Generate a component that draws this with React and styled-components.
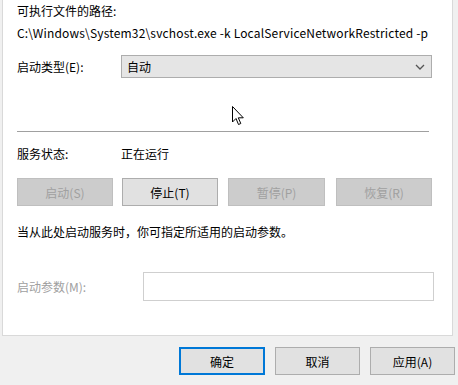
import React from 'react';
import styled, { createGlobalStyle } from 'styled-components';

const GlobalStyle = createGlobalStyle`
  html, body {
    margin: 0;
    padding: 0;
    background: #f0f0f0;
  }
  body {
    font-family: "Noto Sans CJK SC", "Noto Sans", sans-serif;
    font-size: 12px;
    color: #000;
  }
`;

const Frame = styled.div`
  position: relative;
  width: 458px;
  height: 385px;
  overflow: hidden;
  background: #f0f0f0;
`;

const TabPage = styled.div`
  margin-left: 2px;
  width: 451px;
  height: 336px;
  background: #fff;
  border-left: 1px solid #d9d9d9;
  border-right: 1px solid #d9d9d9;
  border-bottom: 1px solid #d9d9d9;
  box-sizing: border-box;
  padding: 3px 0 0 14px;
  display: flex;
  flex-direction: column;
`;

const Label = styled.div`
  height: 16px;
  line-height: 16px;
  white-space: nowrap;
  color: ${(p) => (p.$disabled ? '#a0a0a0' : '#000')};
`;

const PathText = styled.div`
  margin-top: 6px;
  height: 16px;
  line-height: 16px;
  white-space: nowrap;
  color: #000;
  letter-spacing: 0.17px;
`;

const FieldRow = styled.div`
  display: flex;
  align-items: center;
  margin-top: ${(p) => p.$top}px;
`;

const FieldLabel = styled(Label)`
  width: ${(p) => p.$w}px;
  flex: none;
`;

const Select = styled.div`
  width: 311px;
  height: 23px;
  box-sizing: border-box;
  background: #e5e5e5;
  border: 1px solid #adadad;
  display: flex;
  align-items: center;
  justify-content: space-between;
  padding: 0 6px 0 5px;
`;

const Divider = styled.div`
  margin-top: 53px;
  width: 412px;
  height: 1px;
  background: #a0a0a0;
`;

const StatusRow = styled.div`
  display: flex;
  margin-top: 14px;
`;

const ButtonRow = styled.div`
  display: flex;
  margin-top: 16px;
  width: 415px;
`;

const Button = styled.div`
  width: ${(p) => p.$w || 96}px;
  height: 28px;
  margin-left: ${(p) => p.$gap || 0}px;
  box-sizing: border-box;
  display: flex;
  align-items: center;
  justify-content: center;
  background: ${(p) => (p.$disabled ? '#cccccc' : '#e1e1e1')};
  border: ${(p) =>
    p.$primary ? '2px solid #0078d7' : p.$disabled ? '1px solid #bfbfbf' : '1px solid #adadad'};
  color: ${(p) => (p.$disabled ? '#a0a0a0' : '#000')};
  white-space: nowrap;
`;

const Hint = styled(Label)`
  margin-top: 18px;
`;

const Input = styled.div`
  width: 291px;
  height: 29px;
  box-sizing: border-box;
  border: 1px solid #cfcfcf;
  background: #fff;
`;

const Footer = styled.div`
  display: flex;
  justify-content: flex-end;
  gap: 10px;
  padding: 11px 3px 0 0;
`;

const Cursor = styled.svg`
  position: absolute;
  left: 232px;
  top: 106px;
`;

const Chevron = () => (
  <svg width="10" height="6" viewBox="0 0 10 6">
    <path d="M1 1 L5 5 L9 1" fill="none" stroke="#555" strokeWidth="1.3" />
  </svg>
);

export default function App() {
  return (
    <Frame>
      <GlobalStyle />
      <TabPage>
        <Label>可执行文件的路径:</Label>
        <PathText>C:\Windows\System32\svchost.exe -k LocalServiceNetworkRestricted -p</PathText>
        <FieldRow $top={14}>
          <FieldLabel $w={104}>启动类型(E):</FieldLabel>
          <Select>
            <span>自动</span>
            <Chevron />
          </Select>
        </FieldRow>
        <Divider />
        <StatusRow>
          <FieldLabel $w={104}>服务状态:</FieldLabel>
          <Label>正在运行</Label>
        </StatusRow>
        <ButtonRow>
          <Button $disabled>启动(S)</Button>
          <Button $gap={9}>停止(T)</Button>
          <Button $gap={10} $w={97} $disabled>暂停(P)</Button>
          <Button $gap={11} $disabled>恢复(R)</Button>
        </ButtonRow>
        <Hint>当从此处启动服务时，你可指定所适用的启动参数。</Hint>
        <FieldRow $top={32}>
          <FieldLabel $w={126} $disabled>启动参数(M):</FieldLabel>
          <Input />
        </FieldRow>
      </TabPage>
      <Footer>
        <Button $w={86} $primary>确定</Button>
        <Button $w={85}>取消</Button>
        <Button $w={85}>应用(A)</Button>
      </Footer>
      <Cursor width="13" height="20" viewBox="0 0 13 20">
        <path
          d="M0.5 0.5 L0.5 16 L4 12.5 L6.5 18.5 L8.8 17.5 L6.3 11.8 L11.3 11.8 Z"
          fill="#fff"
          stroke="#000"
          strokeWidth="1"
          strokeLinejoin="miter"
        />
      </Cursor>
    </Frame>
  );
}
